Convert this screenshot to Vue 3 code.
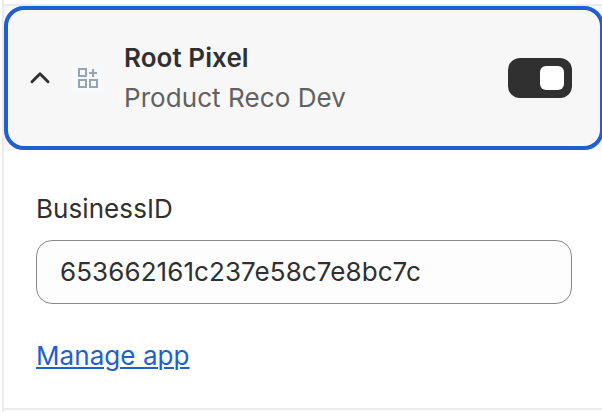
<script setup>
import { ref } from 'vue'

const enabled = ref(true)
const businessId = ref('653662161c237e58c7e8bc7c')
</script>

<template>
  <section class="panel">
    <div class="block">
      <div class="header-wrap">
        <header class="header">
          <svg class="chevron" width="24" height="24" viewBox="0 0 24 24" fill="none">
            <path d="M4 15.7 12 7.8l8 7.9" stroke="#303030" stroke-width="2.9" stroke-linecap="round" stroke-linejoin="round" />
          </svg>
          <span class="app-icon">
            <svg width="32" height="32" viewBox="0 0 32 32" fill="none" stroke="#98a4b3" stroke-width="2">
              <rect x="7" y="7" width="7" height="7" />
              <rect x="7" y="18" width="7" height="7" />
              <rect x="18" y="18" width="7" height="7" />
              <path d="M21 7v8M17 11h8" />
            </svg>
          </span>
          <div class="titles">
            <div class="title">Root Pixel</div>
            <div class="subtitle">Product Reco Dev</div>
          </div>
          <button class="toggle" :class="{ on: enabled }" role="switch" :aria-checked="enabled" @click="enabled = !enabled">
            <span class="knob"></span>
          </button>
        </header>
      </div>
      <div class="settings">
        <label class="label" for="business">BusinessID</label>
        <input id="business" v-model="businessId" class="input" type="text" spellcheck="false" />
        <a class="link" href="#">Manage app</a>
      </div>
    </div>
  </section>
</template>

<style>
body {
  overflow: hidden;
  background: #fff;
}
</style>

<style scoped>
.panel {
  box-sizing: border-box;
  width: 604px;
  height: 412px;
  margin-left: 2px;
  padding-top: 4px;
  border-left: 2px solid #ebebeb;
  font-family: Inter, sans-serif;
  font-size: 26px;
  line-height: 40px;
  letter-spacing: 0.07px;
  color: #303030;
}
.block {
  box-sizing: border-box;
  height: 406px;
  border-top: 2px solid #ebebeb;
  border-bottom: 2px solid #ebebeb;
}
.header-wrap {
  width: 600px;
  background: #f7f7f7;
}
.header {
  box-sizing: border-box;
  display: flex;
  align-items: center;
  height: 144px;
  padding: 0 28px 0 20px;
  border: 4px solid #1f5fd0;
  border-radius: 20px;
}
.chevron {
  flex: none;
}
.app-icon {
  display: flex;
  margin: 0 20px;
  background: #f6f8fa;
}
.titles {
  flex: 1;
}
.title {
  font-weight: 600;
}
.subtitle {
  color: #616161;
}
.toggle {
  display: flex;
  width: 64px;
  height: 40px;
  padding: 8px;
  border: 0;
  border-radius: 12px;
  background: #8a8a8a;
}
.toggle.on {
  justify-content: flex-end;
  background: #303030;
}
.knob {
  width: 24px;
  height: 24px;
  border-radius: 6px;
  background: #fff;
}
.settings {
  display: flex;
  flex-direction: column;
  align-items: flex-start;
  padding: 39px 34px 0 32px;
}
.label {
  height: 51px;
}
.input {
  box-sizing: border-box;
  width: 536px;
  height: 64px;
  padding: 0 23px 2px;
  border: 1px solid #8a8a8a;
  border-radius: 16px;
  outline: 0;
  background: #fdfdfd;
  color: #303030;
  font: inherit;
  letter-spacing: 0.08px;
}
.link {
  margin-top: 32px;
  color: #1f5fd0;
  text-decoration: underline;
  text-decoration-thickness: 2px;
  text-underline-offset: 2px;
}
</style>
